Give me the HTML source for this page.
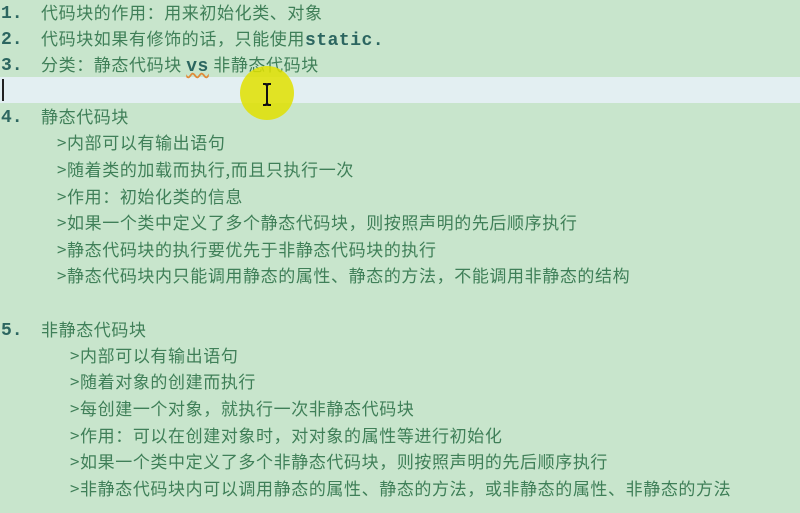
<!DOCTYPE html>
<html><head><meta charset="utf-8"><style>
html,body{margin:0;padding:0;}
body{width:800px;height:513px;overflow:hidden;background:#c8e5cc;position:relative;font-family:"Noto Sans CJK SC","Liberation Sans",sans-serif;}
.l{position:absolute;left:0;height:26px;font-size:17px;letter-spacing:0.6px;color:#3f7f58;white-space:nowrap;}
.n{position:absolute;display:block;top:1px;height:26px;line-height:26px;left:1px;font-family:"Liberation Mono",monospace;font-weight:bold;color:#2c6660;font-size:18px;letter-spacing:0}
.t{position:absolute;display:block;top:-1px;height:26px;line-height:26px;}
.m{font-family:"Liberation Mono",monospace;font-weight:bold;color:#2c6660;font-size:18px;letter-spacing:0.5px}
</style></head><body>
<div style="position:absolute;left:0;top:77px;width:800px;height:26px;background:#e3eff2"></div>
<div style="position:absolute;left:2px;top:79px;width:2px;height:22px;background:#222"></div>
<div class="l" style="top:0"><span class="n">1.</span><span class="t" style="left:41px">代码块的作用：用来初始化类、对象</span></div>
<div class="l" style="top:26px"><span class="n">2.</span><span class="t" style="left:41px">代码块如果有修饰的话，只能使用<span class="m">static.</span></span></div>
<div class="l" style="top:52px"><span class="n">3.</span><span class="t" style="left:41px">分类：静态代码块 <span class="m" style="text-decoration:underline wavy #e08a3a">vs</span> 非静态代码块</span></div>
<div class="l" style="top:104px"><span class="n">4.</span><span class="t" style="left:41px">静态代码块</span></div>
<div class="l" style="top:130px"><span class="t" style="left:57px">&gt;内部可以有输出语句</span></div>
<div class="l" style="top:157px"><span class="t" style="left:57px">&gt;随着类的加载而执行,而且只执行一次</span></div>
<div class="l" style="top:184px"><span class="t" style="left:57px">&gt;作用：初始化类的信息</span></div>
<div class="l" style="top:210px"><span class="t" style="left:57px">&gt;如果一个类中定义了多个静态代码块，则按照声明的先后顺序执行</span></div>
<div class="l" style="top:237px"><span class="t" style="left:57px">&gt;静态代码块的执行要优先于非静态代码块的执行</span></div>
<div class="l" style="top:263px"><span class="t" style="left:57px">&gt;静态代码块内只能调用静态的属性、静态的方法，不能调用非静态的结构</span></div>
<div class="l" style="top:317px"><span class="n">5.</span><span class="t" style="left:41px">非静态代码块</span></div>
<div class="l" style="top:343px"><span class="t" style="left:70px">&gt;内部可以有输出语句</span></div>
<div class="l" style="top:369px"><span class="t" style="left:70px">&gt;随着对象的创建而执行</span></div>
<div class="l" style="top:396px"><span class="t" style="left:70px">&gt;每创建一个对象，就执行一次非静态代码块</span></div>
<div class="l" style="top:423px"><span class="t" style="left:70px">&gt;作用：可以在创建对象时，对对象的属性等进行初始化</span></div>
<div class="l" style="top:449px"><span class="t" style="left:70px">&gt;如果一个类中定义了多个非静态代码块，则按照声明的先后顺序执行</span></div>
<div class="l" style="top:476px"><span class="t" style="left:70px">&gt;非静态代码块内可以调用静态的属性、静态的方法，或非静态的属性、非静态的方法</span></div>
<div style="position:absolute;left:240px;top:66px;width:54px;height:54px;border-radius:50%;background:rgba(225,225,0,0.85)"></div>
<svg style="position:absolute;left:261px;top:82px" width="12" height="26" viewBox="0 0 12 26"><path d="M2 2h3l1 2 1-2h3M6 4v17M2 23h3l1-2 1 2h3" stroke="#111" stroke-width="2" fill="none"/></svg>
</body></html>
